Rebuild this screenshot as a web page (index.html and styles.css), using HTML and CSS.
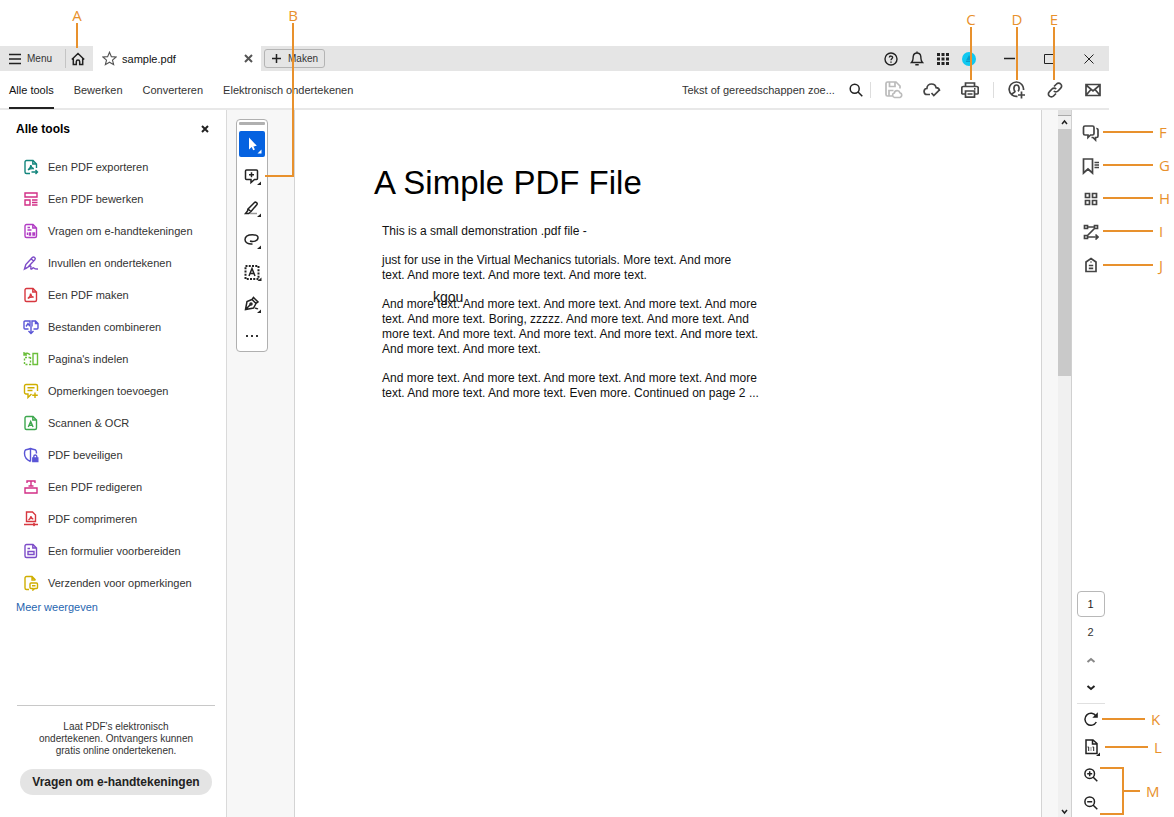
FILE: index.html
```
<!DOCTYPE html>
<html lang="nl">
<head>
    <meta charset="UTF-8">
    <meta name="viewport" content="width=device-width, initial-scale=1.0">
    <title>sample.pdf</title>
    <link rel="stylesheet" href="styles.css">
</head>
<body>
<div class="figure">
    <div class="app">
        <header class="titlebar">
            <button class="menu-btn" type="button">
                <svg class="icon" width="12" height="12" viewBox="0 0 12 12"><path d="M0 1.500h12M0 6h12M0 10.500h12"/></svg>
                Menu
            </button>
            <button class="home-btn" type="button" aria-label="Home">
                <svg class="icon" width="14" height="14" viewBox="0 0 14 14"><path d="M.8 7.500 7 1.500l6.200 6M2.300 6.500v6h3V9.700a1.700 1.700 0 0 1 3.400 0v2.800h3v-6"/></svg>
            </button>
            <div class="file-tab">
                <svg class="icon star" width="15" height="15" viewBox="0 0 16 16"><path d="M8 1.300 10 6l5 .4-3.800 3.300 1.200 4.900L8 12l-4.400 2.600 1.200-4.900L1 6.400 6 6z"/></svg>
                <span>sample.pdf</span>
                <button class="tab-close" type="button" aria-label="Sluiten">
                    <svg class="icon thick" width="9" height="9" viewBox="0 0 9 9"><path d="m1 1 7 7M8 1 1 8"/></svg>
                </button>
            </div>
            <button class="create-btn" type="button">
                <svg class="icon" width="9" height="9" viewBox="0 0 9 9"><path d="M4.500 0v9M0 4.500h9"/></svg>
                Maken
            </button>
            <div class="account">
                <button type="button" aria-label="Help">
                    <svg class="icon" width="14" height="14" viewBox="0 0 14 14"><circle cx="7" cy="7" r="6"/><path d="M5.300 5.500c.2-2 3.400-1.800 3.300 0C8.500 6.700 7 6.700 7 8.200M7 9.500v1.200"/></svg>
                </button>
                <button type="button" aria-label="Meldingen">
                    <svg class="icon" width="14" height="15" viewBox="0 0 14 15"><path d="M1.500 11.500h11c-2-1.800-1.400-3.500-1.700-6C10.500 3.300 9 2 7 2S3.500 3.300 3.200 5.500c-.3 2.500.3 4.200-1.700 6zM7 .5V2M5.300 13.800h3.400"/></svg>
                </button>
                <button type="button" aria-label="Apps">
                    <svg width="12" height="12" viewBox="0 0 12 12"><path fill="#222" d="M0 0h3v3H0zM4.500 0h3v3h-3zM9 0h3v3H9zM0 4.500h3v3H0zM4.500 4.500h3v3h-3zM9 4.500h3v3H9zM0 9h3v3H0zM4.500 9h3v3h-3zM9 9h3v3H9z"/></svg>
                </button>
                <button type="button" aria-label="Account">
                    <svg width="14" height="14" viewBox="0 0 14 14"><circle cx="7" cy="7" r="7" fill="#10c8f0"/><path fill="#0a9cc8" d="M7 3l3 5.500H4zM4 9h6v1H4z"/></svg>
                </button>
            </div>
            <div class="window-controls">
                <button type="button" aria-label="Minimaliseren">
                    <svg class="icon" width="11" height="11" viewBox="0 0 11 11"><path d="M0 5.500h11"/></svg>
                </button>
                <button type="button" aria-label="Maximaliseren">
                    <svg class="icon thin" width="10" height="10" viewBox="0 0 10 10"><path d="M.5.5h9v9h-9z"/></svg>
                </button>
                <button type="button" aria-label="Venster sluiten">
                    <svg class="icon thin" width="10" height="10" viewBox="0 0 10 10"><path d="m.5.5 9 9M9.500.5l-9 9"/></svg>
                </button>
            </div>
        </header>

        <div class="toolbar">
            <nav class="tabs">
                <a class="active" href="#">Alle tools</a>
                <a href="#">Bewerken</a>
                <a href="#">Converteren</a>
                <a href="#">Elektronisch ondertekenen</a>
            </nav>
            <div class="actions">
                <div class="search">
                    <input type="text" aria-label="Zoeken" placeholder="Tekst of gereedschappen zoe...">
                    <button type="button" aria-label="Zoek">
                        <svg class="icon" width="14" height="14" viewBox="0 0 14 14"><circle cx="5.700" cy="5.700" r="4.500"/><path d="m9 9 4.300 4.300"/></svg>
                    </button>
                </div>
                <span class="divider"></span>
                <div class="action-group">
                    <button class="disabled" type="button" aria-label="Opslaan">
                        <svg class="icon" width="18" height="18" viewBox="0 0 18 18"><path d="M7 15H2.500A1.500 1.500 0 0 1 1 13.500v-11A1.500 1.500 0 0 1 2.500 1H11l4 4v2.500M4.500 1v4.500H10V1M4 15V9.500h4.500M9.500 16.500a2.300 2.300 0 0 1-.2-4.500 2.900 2.900 0 0 1 5.600-.3 2.500 2.500 0 0 1 .1 4.800z"/></svg>
                    </button>
                    <button type="button" aria-label="Cloud">
                        <svg class="icon" width="18" height="16" viewBox="0 0 18 16"><path d="M7 12.500H4.300a3 3 0 0 1-.4-6C4 3.600 6.200 2 8.500 2c2.400 0 4.200 1.500 4.600 3.700 2 .1 3.400 1.300 3.400 3.300M8.500 11l2.300 2.500 5.200-5.200"/></svg>
                    </button>
                    <button type="button" aria-label="Afdrukken">
                        <svg class="icon" width="18" height="16" viewBox="0 0 18 16"><path d="M4.500 4.500V1h9v3.500M4.500 12H1.800a1 1 0 0 1-1-1V6a1.500 1.500 0 0 1 1.500-1.500h13.400A1.500 1.500 0 0 1 17.200 6v5a1 1 0 0 1-1 1h-2.700M4.500 9h9v6.200h-9zM6.500 12h5M13 6.800h1.500"/></svg>
                    </button>
                </div>
                <span class="divider"></span>
                <div class="action-group">
                    <button type="button" aria-label="Delen">
                        <svg class="icon" width="18" height="18" viewBox="0 0 18 18"><path d="M9.500 15.300A7.200 7.200 0 1 1 15.500 9M4 13.300c.5-1.600 3-1.500 3-3C5.500 9 5.300 4 8.500 4s3 5 1.500 6.300M13.500 10.500v7M10 14h7"/></svg>
                    </button>
                    <button type="button" aria-label="Koppeling">
                        <svg class="icon" width="16" height="16" viewBox="0 0 16 16"><path d="m7 4.500 2.500-2.500a2.900 2.900 0 0 1 4.200 0 2.900 2.900 0 0 1 0 4.200L11 9a2.900 2.900 0 0 1-4.200 0M9 11.500 6.500 14a2.900 2.900 0 0 1-4.200 0 2.900 2.900 0 0 1 0-4.200L5 7a2.900 2.900 0 0 1 4.200 0"/></svg>
                    </button>
                    <button type="button" aria-label="E-mail">
                        <svg class="icon" width="16" height="14" viewBox="0 0 16 14"><path d="M1 1.500h14v11H1zM1 2l7 5.800L15 2M1 12.300 6 6.500M15 12.300l-5-5.800"/></svg>
                    </button>
                </div>
            </div>
        </div>

        <div class="workspace">
            <aside class="sidebar">
                <div class="sidebar-head">
                    <h2>Alle tools</h2>
                    <button type="button" aria-label="Paneel sluiten">
                        <svg class="icon thick" width="8" height="8" viewBox="0 0 8 8"><path d="m1 1 6 6M7 1 1 7"/></svg>
                    </button>
                </div>
                <ul class="tool-list">
                    <li><a href="#">
                        <svg class="teal" viewBox="0 0 16 16"><path d="M7 14.500H3.500A1.500 1.500 0 0 1 2 13V3a1.500 1.500 0 0 1 1.500-1.500H10L13.500 5v4M9.800 1.500V5h3.700M5 11c1.800-1.300 3-3.500 2.800-5 .2 2 1.200 3.200 3 3.700-2-.3-4 .2-5.800 1.300M8.500 13h6M12.500 11l2 2-2 2"/></svg>
                        Een PDF exporteren</a></li>
                    <li><a href="#">
                        <svg class="pink" viewBox="0 0 16 16"><path d="M2 2h12v4H2zM2 9h5v5H2zM9 9h5.500M9 11.500h5.500M9 14h5.500"/></svg>
                        Een PDF bewerken</a></li>
                    <li><a href="#">
                        <svg class="magenta" viewBox="0 0 16 16"><path d="M3.500 1.500H10L13.500 5v8a1.500 1.500 0 0 1-1.500 1.500H3.500A1.500 1.500 0 0 1 2 13V3a1.500 1.500 0 0 1 1.500-1.500zM9.800 1.500V5h3.700M4.500 4.500H7M4.500 7h4M4.500 12V9.500M6.500 12h1v-2h-1zM10 12h1.500v-2H10z"/></svg>
                        Vragen om e-handtekeningen</a></li>
                    <li><a href="#">
                        <svg class="violet" viewBox="0 0 16 16"><path d="m1.500 14 1.300-4.500 6.500-7c1.500-1.500 4 .5 2.500 2.300l-6.500 7zM8.300 4l2.300 2M1.500 14c3-.5 4.500-3.500 6-3s-.5 2.500.5 3 1.500-1.500 2.500-1.200.5 1.500 4.500 1.200"/></svg>
                        Invullen en ondertekenen</a></li>
                    <li><a href="#">
                        <svg class="red" viewBox="0 0 16 16"><path d="M3.500 1.500H10L13.500 5v8a1.500 1.500 0 0 1-1.500 1.500H3.500A1.500 1.500 0 0 1 2 13V3a1.500 1.500 0 0 1 1.500-1.500zM9.800 1.500V5h3.700M4.800 11.500c1.800-1.300 3-3.500 2.800-5 .2 2 1.200 3.200 3 3.700-2-.3-4 .2-5.800 1.300"/></svg>
                        Een PDF maken</a></li>
                    <li><a href="#">
                        <svg class="indigo" viewBox="0 0 16 16"><path d="M5.500 10H2a1 1 0 0 1-1-1V3a1 1 0 0 1 1-1h5v5.500M3 7.500 5 4.500 6.500 7M10.500 10H14a1 1 0 0 0 1-1V4.500L12.500 2H9v5.500M12.500 2v2.500H15M8 7.500v7M5.500 12 8 14.500l2.500-2.500"/></svg>
                        Bestanden combineren</a></li>
                    <li><a href="#">
                        <svg class="lime" viewBox="0 0 16 16"><path d="M10 2.500h4.500v11H10zM1 3.500C3 1.500 6 2 7 4M1 1v3h3"/><path stroke-dasharray="2 1.500" d="M7.500 6v7.500h-6V6.500h6"/></svg>
                        Pagina's indelen</a></li>
                    <li><a href="#">
                        <svg class="yellow" viewBox="0 0 16 16"><path d="M8.500 11 5 14.500V11H3a1.500 1.500 0 0 1-1.500-1.500V3A1.500 1.500 0 0 1 3 1.500h10A1.500 1.500 0 0 1 14.500 3v5M4.500 4.800h7M4.500 7.500h5M12 9.500v5.500M9.200 12.300h5.600"/></svg>
                        Opmerkingen toevoegen</a></li>
                    <li><a href="#">
                        <svg class="green" viewBox="0 0 16 16"><path d="M3.500 1.500H10L13.500 5v8a1.500 1.500 0 0 1-1.500 1.500H3.500A1.500 1.500 0 0 1 2 13V3a1.500 1.500 0 0 1 1.500-1.500zM9.800 1.500V5h3.700M5.300 12l2.400-5.500 2.400 5.500M6.200 10.300h3"/></svg>
                        Scannen &amp; OCR</a></li>
                    <li><a href="#">
                        <svg class="indigo" viewBox="0 0 16 16"><path d="M7.500 14.500C3 12.500 1.500 10 1.500 6.500c0-2.200.5-3.500 1.500-3.800 1.800-.2 3-.6 4.500-1.200 1.500.6 2.700 1 4.500 1.200 1 .3 1.500 1.600 1.500 3.800M7.500 1.500v13M10.800 11V9.500a1.500 1.500 0 0 1 3 0V11"/><path class="solid" d="M9.800 11h5v3.500h-5z"/></svg>
                        PDF beveiligen</a></li>
                    <li><a href="#">
                        <svg class="pink" viewBox="0 0 16 16"><path d="M2 9h12v5H2zM4 4V2h8v2M8 2v5M5.500 7h5"/></svg>
                        Een PDF redigeren</a></li>
                    <li><a href="#">
                        <svg class="red" viewBox="0 0 16 16"><path d="M4.500 1H9.500L12.500 4v6.500h-9V1zM5.500 9c1.500-1 2.300-2.500 2.300-3.800.2 1.600 1 2.500 2.500 2.800M1 13.500h14M10.500 12l1.500 1.500-1.500 1.500"/></svg>
                        PDF comprimeren</a></li>
                    <li><a href="#">
                        <svg class="violet" viewBox="0 0 16 16"><path d="M3.500 1.500H10L13.500 5v8a1.500 1.500 0 0 1-1.500 1.500H3.500A1.500 1.500 0 0 1 2 13V3a1.500 1.500 0 0 1 1.500-1.500zM9.800 1.500V5h3.700M4.500 5.500H7M5 8.500h6v3H5z"/></svg>
                        Een formulier voorbereiden</a></li>
                    <li><a href="#">
                        <svg class="yellow" viewBox="0 0 16 16"><path d="M6 14.500H3.500A1.500 1.500 0 0 1 2 13V3a1.500 1.500 0 0 1 1.500-1.500H9L12.500 5M9 1.500V5h3.500M8 8h5.500a1 1 0 0 1 1 1v3.500a1 1 0 0 1-1 1h-1.700L10 15v-1.500H8a1 1 0 0 1-1-1V9a1 1 0 0 1 1-1zM9 10.800h3.500"/></svg>
                        Verzenden voor opmerkingen</a></li>
                </ul>
                <a class="more" href="#">Meer weergeven</a>
                <div class="promo">
                    <p>Laat PDF's elektronisch<br>ondertekenen. Ontvangers kunnen<br>gratis online ondertekenen.</p>
                    <button type="button">Vragen om e-handtekeningen</button>
                </div>
            </aside>

            <main class="viewer">
                <div class="gutter">
                    <div class="quick-tools">
                        <span class="handle"></span>
                        <button class="selected" type="button" aria-label="Selecteren">
                            <svg width="26" height="26" viewBox="0 0 26 26"><path fill="#fff" d="M10 6.500v12l2.700-2.400 1.500 3.200 1.700-.8-1.500-3.100 3.400-.6zM22.500 18.500v4h-4z"/></svg>
                        </button>
                        <button type="button" aria-label="Opmerking">
                            <svg class="icon" width="26" height="26" viewBox="0 0 26 26"><path d="M7.500 7h10a1 1 0 0 1 1 1v7.500a1 1 0 0 1-1 1h-2L12 19.500v-3H7.500a1 1 0 0 1-1-1V8a1 1 0 0 1 1-1zM12.500 9.300v5M10 11.800h5"/><path class="corner" d="M22 18.500V22h-4z"/></svg>
                        </button>
                        <button type="button" aria-label="Markeren">
                            <svg class="icon" width="26" height="26" viewBox="0 0 26 26"><path d="m9 14 6.500-6.500c1-1 3.500.7 2.500 2L12 16.500zM9 14l-.5 2-2 2.500h3.300l2.200-2"/><path class="faint" d="M11 18.500h7"/><path class="corner" d="M22 18.500V22h-4z"/></svg>
                        </button>
                        <button type="button" aria-label="Tekenen">
                            <svg class="icon" width="26" height="26" viewBox="0 0 26 26"><path d="M11 14c3 1.300 8 0 8-3.200 0-2-2.500-3-5.500-3C9 7.800 6 9.500 6 12.800c0 3 3.500 4.700 7.500 4.200"/><path class="corner" d="M22 18.500V22h-4z"/></svg>
                        </button>
                        <button type="button" aria-label="Tekst">
                            <svg class="icon" width="26" height="26" viewBox="0 0 26 26"><path stroke-width="2" stroke-dasharray="2 1.250" d="M6.500 7h13v13h-13z"/><path d="m10 17 3-7.500 3 7.500M11 14.500h4"/><path class="corner" d="M22.500 18.500V22h-4z"/></svg>
                        </button>
                        <button type="button" aria-label="Ondertekenen">
                            <svg class="icon" width="26" height="26" viewBox="0 0 26 26"><path d="m6.500 18.500 1.500-8 5-2 4 4-2.500 4.500zM13 8.500l1.500-2 4.500 4.500-2 1.500M6.500 18.500l5-5M16 17.500c1-1 1.500 1 3 0"/><circle cx="12" cy="13" r="1"/><path class="corner" d="M22 18.500V22h-4z"/></svg>
                        </button>
                        <button type="button" aria-label="Meer">
                            <svg width="26" height="26" viewBox="0 0 26 26"><path fill="#333" d="M7 12h2v2H7zM12 12h2v2h-2zM17 12h2v2h-2z"/></svg>
                        </button>
                    </div>
                </div>
                <article class="page">
                    <h1>A Simple PDF File</h1>
                    <p>This is a small demonstration .pdf file -</p>
                    <p>just for use in the Virtual Mechanics tutorials. More text. And more<br>text. And more text. And more text. And more text.</p>
                    <p>And more text. And more text. And more text. And more text. And more<br>text. And more text. Boring, zzzzz. And more text. And more text. And<br>more text. And more text. And more text. And more text. And more text.<br>And more text. And more text.</p>
                    <p>And more text. And more text. And more text. And more text. And more<br>text. And more text. And more text. Even more. Continued on page 2 ...</p>
                    <span class="typed">kgou</span>
                </article>
                <div class="scrollbar">
                    <span class="split"></span>
                    <svg class="icon" width="13" height="13" viewBox="0 0 13 13"><path d="m4 8 2.500-3L9 8"/></svg>
                    <span class="thumb"></span>
                    <svg class="icon" width="13" height="13" viewBox="0 0 13 13"><path d="m4 6 2.500 3L9 6"/></svg>
                </div>
            </main>

            <aside class="rail">
                <div class="rail-top">
                    <button type="button" aria-label="Opmerkingen">
                        <svg class="icon" width="18" height="18" viewBox="0 0 18 18"><path d="M3 2h7.500A1.500 1.500 0 0 1 12 3.500v6a1.500 1.500 0 0 1-1.500 1.500H8.500L6 13.500V11H3a1.500 1.500 0 0 1-1.500-1.500v-6A1.500 1.500 0 0 1 3 2zM14.300 4.500A1.500 1.500 0 0 1 16 6v6a1.500 1.500 0 0 1-1.500 1.500h-1v2.500L11 13.500H9.500"/></svg>
                    </button>
                    <button type="button" aria-label="Bladwijzers">
                        <svg class="icon" width="18" height="18" viewBox="0 0 18 18"><path d="M1.500 2h9v14L6 12l-4.500 4zM12.500 5.500H17M12.500 8H17M12.500 10.500H17"/></svg>
                    </button>
                    <button type="button" aria-label="Miniaturen">
                        <svg class="icon" width="14" height="14" viewBox="0 0 14 14"><path d="M1.500 1.500h4v4h-4zM8.500 1.500h4v4h-4zM1.500 8.500h4v4h-4zM8.500 8.500h4v4h-4z"/></svg>
                    </button>
                    <button type="button" aria-label="Volgorde">
                        <svg class="icon" width="16" height="16" viewBox="0 0 16 16"><path d="M1.500 1.500h3v3h-3zM11.500 1.500h3v3h-3zM1.500 11.500h3v3h-3zM4.500 3h7M11.500 4.500l-7 7M4.500 13H15M12.500 10.500 15 13l-2.500 2.500"/></svg>
                    </button>
                    <button type="button" aria-label="Velden">
                        <svg class="icon" width="14" height="16" viewBox="0 0 14 16"><path d="M7 1.500 12 5v9.500H2V5zM4.800 8.500h4.400M4.800 11.300h4.400M7 4.500v1"/></svg>
                    </button>
                </div>
                <div class="rail-bottom">
                    <input class="page-input" type="text" value="1" aria-label="Pagina">
                    <span class="page-total">2</span>
                    <button class="disabled" type="button" aria-label="Vorige pagina">
                        <svg class="icon thick" width="10" height="6" viewBox="0 0 10 6"><path d="m1.500 5 3.500-3 3.500 3"/></svg>
                    </button>
                    <button type="button" aria-label="Volgende pagina">
                        <svg class="icon thick" width="10" height="6" viewBox="0 0 10 6"><path d="M1.500 1 5 4l3.500-3"/></svg>
                    </button>
                    <span class="rule"></span>
                    <button type="button" aria-label="Roteren">
                        <svg class="icon" width="14" height="14" viewBox="0 0 14 14"><path d="M12.300 10A6 6 0 1 1 12 4"/><path class="corner" d="M13.800.3v5.500H8.300z"/></svg>
                    </button>
                    <button type="button" aria-label="Ware grootte">
                        <svg class="icon" width="26" height="26" viewBox="0 0 26 26"><path d="M8 6h7l4 3.500v10H8zM14.500 6v4h4"/><path class="fine" d="M9.500 13h1.200v4M14.500 13h1.200v4M13 13.500v1M13 15.500v1"/><path class="corner" d="M22 18.500V22h-4z"/></svg>
                    </button>
                    <button type="button" aria-label="Inzoomen">
                        <svg class="icon" width="14" height="14" viewBox="0 0 14 14"><circle cx="5.700" cy="5.700" r="4.800"/><path d="m9 9 4.300 4.300M3.200 5.700h5M5.700 3.200v5"/></svg>
                    </button>
                    <button type="button" aria-label="Uitzoomen">
                        <svg class="icon" width="14" height="14" viewBox="0 0 14 14"><circle cx="5.700" cy="5.700" r="4.800"/><path d="m9 9 4.300 4.300M3.200 5.700h5"/></svg>
                    </button>
                </div>
            </aside>
        </div>
    </div>

    <!-- callouts drawn over the window -->
    <div class="callout top a">A</div>
    <div class="callout top b">B</div>
    <div class="callout top c">C</div>
    <div class="callout top d">D</div>
    <div class="callout top e">E</div>
    <div class="callout side f">F</div>
    <div class="callout side g">G</div>
    <div class="callout side h">H</div>
    <div class="callout side i">I</div>
    <div class="callout side j">J</div>
    <div class="callout side k">K</div>
    <div class="callout side l">L</div>
    <div class="callout range m"><span class="bracket"></span><span class="stem"></span>M</div>
</div>
</body>
</html>
```
FILE: styles.css
```
* {
    box-sizing: border-box;
}
body {
    margin: 0;
    font-family: "Liberation Sans", Arial, sans-serif;
    font-size: 11px;
    color: #333;
    background: #fff;
}
a {
    color: inherit;
    text-decoration: none;
}
button {
    display: flex;
    align-items: center;
    justify-content: center;
    padding: 0;
    border: none;
    background: none;
    font-family: inherit;
    color: inherit;
    cursor: pointer;
}
h1, h2, p, ul {
    margin: 0;
    padding: 0;
}
.icon {
    fill: none;
    stroke: #222;
    stroke-width: 1.5;
}
.icon.thin,
.icon .fine {
    stroke-width: 1;
}
.icon.thick {
    stroke-width: 2;
}
.icon .corner {
    fill: #222;
    stroke: none;
}
.icon .faint {
    stroke: #999;
}
.figure {
    position: relative;
    display: flex;
    min-height: 100vh;
    padding: 46px 65px 0 0;
}
.app {
    flex: 1;
    display: flex;
    flex-direction: column;
}

/* title bar */
.titlebar {
    display: flex;
    align-items: center;
    height: 25px;
    background: #e5e5e5;
}
.menu-btn {
    gap: 6px;
    height: 19px;
    padding: 0 13px 0 9px;
    border-right: 1px solid #c4c4c4;
    font-size: 10px;
}
.home-btn {
    width: 27px;
    padding-right: 3px;
}
.file-tab {
    display: flex;
    align-items: center;
    gap: 5px;
    width: 168px;
    height: 25px;
    padding: 0 8px 0 9px;
    background: #fff;
    color: #111;
}
.star {
    stroke: #555;
    stroke-width: 1.2;
}
.tab-close {
    margin-left: auto;
}
.tab-close .icon {
    stroke: #555;
}
.create-btn {
    gap: 7px;
    height: 19px;
    margin-left: 3px;
    padding: 0 6px 0 7px;
    border: 1px solid #b4b4b4;
    border-radius: 3px;
    font-size: 10px;
}
.account {
    display: flex;
    gap: 6px;
    margin: 0 10px 0 auto;
}
.account button {
    width: 20px;
    height: 20px;
}
.account .icon {
    stroke-width: 1.4;
}
.window-controls {
    display: flex;
    height: 22px;
}
.window-controls button {
    width: 40px;
}

/* toolbar */
.toolbar {
    display: flex;
    justify-content: space-between;
    height: 39px;
    border-bottom: 2px solid #e8e8e8;
}
.tabs {
    display: flex;
    gap: 20px;
    padding-left: 9px;
}
.tabs a {
    display: flex;
    align-items: center;
    height: 38px;
    padding-top: 2px;
    border-bottom: 2px solid transparent;
    white-space: nowrap;
}
.tabs .active {
    border-color: #222;
    color: #111;
}
.actions {
    display: flex;
    align-items: center;
    gap: 7px;
}
.actions .divider {
    width: 1px;
    height: 16px;
    background: #ddd;
}
.search {
    display: flex;
    gap: 7px;
}
.search input {
    width: 160px;
    padding: 0;
    border: none;
    outline: none;
    font-family: inherit;
    font-size: 11px;
    color: #333;
}
.search input::placeholder {
    color: #333;
    opacity: 1;
}
.action-group {
    display: flex;
    gap: 6px;
}
.action-group button {
    width: 32px;
    height: 26px;
}
.action-group .icon,
.rail-top .icon {
    stroke: #444;
    stroke-width: 1.7;
}
.action-group .disabled .icon {
    stroke: #bbb;
}

/* sidebar */
.workspace {
    flex: 1;
    display: flex;
}
.sidebar {
    display: flex;
    flex-direction: column;
    width: 227px;
    padding-bottom: 22px;
    border-right: 1px solid #dadada;
}
.sidebar-head {
    display: flex;
    justify-content: space-between;
    align-items: center;
    height: 41px;
    padding: 0 17px 4px 16px;
}
.sidebar-head h2 {
    font-size: 12px;
    color: #000;
}
.tool-list {
    list-style: none;
}
.tool-list a {
    display: flex;
    align-items: center;
    gap: 9px;
    height: 32px;
    padding-left: 23px;
}
.tool-list svg {
    width: 16px;
    height: 16px;
    fill: none;
    stroke: currentColor;
    stroke-width: 1.4;
}
.tool-list .solid {
    fill: currentColor;
}
.tool-list .teal {
    color: #12857c;
}
.tool-list .pink {
    color: #d22f87;
}
.tool-list .magenta {
    color: #b13cc4;
}
.tool-list .violet {
    color: #7d4cc8;
}
.tool-list .red {
    color: #d7373f;
}
.tool-list .indigo {
    color: #5a55d6;
}
.tool-list .lime {
    color: #6cbf3c;
}
.tool-list .yellow {
    color: #cfae00;
}
.tool-list .green {
    color: #3da74e;
}
.more {
    padding-left: 16px;
    line-height: 17px;
    color: #1f66b0;
}
.promo {
    display: flex;
    flex-direction: column;
    align-items: center;
    gap: 12px;
    margin: auto 11px 0 17px;
    padding-top: 15px;
    border-top: 1px solid #c8c8c8;
}
.promo p {
    font-size: 10px;
    line-height: 12px;
    text-align: center;
}
.promo button {
    height: 26px;
    padding: 0 12px;
    border-radius: 13px;
    background: #e4e4e4;
    font-size: 12px;
    font-weight: bold;
    color: #222;
}

/* document */
.viewer {
    flex: 1;
    display: flex;
    background: #f7f7f7;
    border-right: 1px solid #d0d0d0;
}
.gutter {
    width: 67px;
    padding: 9px;
}
.quick-tools {
    display: flex;
    flex-direction: column;
    align-items: center;
    gap: 6px;
    width: 32px;
    padding: 2px 0;
    border: 1px solid #b0b0b0;
    border-radius: 4px;
    background: #fff;
}
.quick-tools .handle {
    width: 26px;
    height: 3px;
    border-radius: 1px;
    background: #b0b0b0;
}
.quick-tools button {
    width: 26px;
    height: 26px;
    border-radius: 2px;
}
.quick-tools .selected {
    background: #0562e0;
}
.page {
    position: relative;
    flex: 1;
    padding: 54px 20px 20px 79px;
    border: 1px solid #d4d4d4;
    border-width: 0 1px;
    background: #fff;
    color: #111;
    white-space: nowrap;
}
.page h1 {
    margin-bottom: 22px;
    font-size: 33px;
    font-weight: normal;
    line-height: 38px;
    color: #000;
}
.page p {
    margin: 0 0 14px 8px;
    font-size: 12px;
    line-height: 15px;
}
.page .typed {
    position: absolute;
    top: 179px;
    left: 138px;
    font-size: 14px;
    line-height: 16px;
}
.scrollbar {
    display: flex;
    flex-direction: column;
    width: 13px;
    margin-left: 16px;
    background: #f0f0f0;
}
.scrollbar .split {
    height: 6px;
    border-bottom: 1px solid #aaa;
    background: #e0e0e0;
}
.scrollbar .thumb {
    height: 35%;
    margin-bottom: auto;
    background: #c9c9c9;
}

/* right rail */
.rail {
    display: flex;
    flex-direction: column;
    justify-content: space-between;
    align-items: center;
    width: 37px;
    padding: 10px 0 1px;
}
.rail-top,
.rail-bottom {
    display: flex;
    flex-direction: column;
    align-items: center;
    gap: 7px;
}
.rail-bottom {
    gap: 2px;
}
.rail button,
.page-total {
    width: 26px;
    height: 26px;
}
.rail .disabled .icon {
    stroke: #888;
}
.page-input {
    width: 28px;
    height: 26px;
    padding: 0;
    border: 1px solid #b8b8b8;
    border-radius: 4px;
    font-family: inherit;
    font-size: 11px;
    text-align: center;
    color: #222;
}
.page-total {
    line-height: 26px;
    text-align: center;
}
.rail .rule {
    width: 28px;
    height: 1px;
    background: #e0e0e0;
}

/* callouts */
.callout {
    position: absolute;
    display: flex;
    align-items: center;
    font-family: "Open Sans", "Noto Sans", sans-serif;
    font-size: 15px;
    line-height: 16px;
    color: #e8912d;
}
.callout.top {
    top: 7px;
    flex-direction: column;
    width: 16px;
    height: 41px;
}
.callout.top::after {
    content: "";
    flex: 1;
    width: 2px;
    background: #e8912d;
}
.callout.side {
    gap: 6px;
    width: 71px;
    height: 16px;
}
.callout.side::before {
    content: "";
    width: 50px;
    height: 2px;
    background: #e8912d;
}
.callout.a {
    left: 69px;
}
.callout.b {
    left: 285px;
    height: 170px;
}
.callout.b::before {
    content: "";
    position: absolute;
    right: 7px;
    bottom: 0;
    width: 29px;
    height: 2px;
    background: #e8912d;
}
.callout.c,
.callout.d,
.callout.e {
    top: 11px;
    height: 69px;
}
.callout.c {
    right: 195px;
}
.callout.d {
    right: 149px;
}
.callout.e {
    right: 112px;
}
.callout.f,
.callout.g,
.callout.h,
.callout.i,
.callout.j {
    right: 0;
}
.callout.f {
    top: 124px;
}
.callout.g {
    top: 157px;
}
.callout.h {
    top: 190px;
}
.callout.i {
    top: 223px;
}
.callout.j {
    top: 257px;
}
.callout.k {
    right: 1px;
    bottom: 90px;
}
.callout.l {
    right: -2px;
    bottom: 62px;
}
.callout.k::before,
.callout.l::before {
    width: 43px;
}
.callout.range {
    width: 71px;
    height: 48px;
}
.callout.m {
    right: 3px;
    bottom: 2px;
}
.bracket {
    width: 24px;
    height: 48px;
    border: 2px solid #e8912d;
    border-left: none;
}
.stem {
    width: 16px;
    height: 2px;
    margin-right: 6px;
    background: #e8912d;
}
```
